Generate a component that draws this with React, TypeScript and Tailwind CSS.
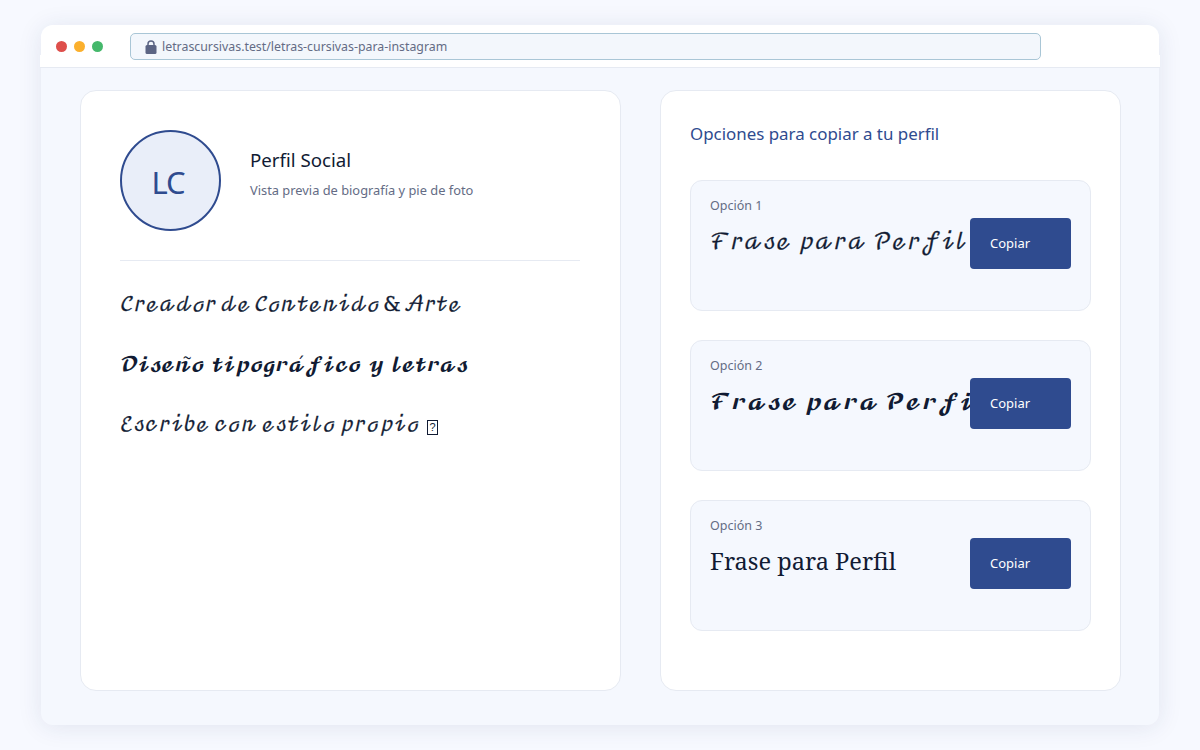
const SCRIPT = "font-['DejaVu_Math_TeX_Gyre','DejaVu_Serif',serif]"

const OPTIONS = [
  { label: 'Opción 1', text: 'ℱ𝓇𝒶𝓈ℯ 𝓅𝒶𝓇𝒶 𝒫ℯ𝓇𝒻𝒾𝓁', cls: `${SCRIPT} mb-[2px] text-[21.8px] [-webkit-text-stroke:0.35px_#111b33]` },
  { label: 'Opción 2', text: '𝓕𝓻𝓪𝓼𝓮 𝓹𝓪𝓻𝓪 𝓟𝓮𝓻𝓯𝓲𝓵', cls: `${SCRIPT} mb-[2px] text-[20.5px]` },
  { label: 'Opción 3', text: 'Frase para Perfil', cls: "mb-[5px] font-['Noto_Serif',serif] text-[23.6px]" },
]

export default function App() {
  return (
    <div className="h-[750px] w-[1200px] overflow-hidden bg-[#f7f9ff] px-[41px] py-[25px] font-['Noto_Sans',sans-serif]">
      <div className="h-[700px] rounded-xl bg-[#f5f8fe] shadow-[0_2px_24px_rgba(30,50,100,0.10)]">
        <div className="relative flex h-[43px] items-center rounded-t-xl bg-white pl-[15px] after:absolute after:-left-px after:-right-px after:bottom-0 after:h-[13px] after:border-b after:border-[#e6eaf2] after:bg-white">
          <span className="h-[11px] w-[11px] rounded-full bg-[#de4f4b]" />
          <span className="ml-[7px] h-[11px] w-[11px] rounded-full bg-[#fbb02d]" />
          <span className="ml-[7px] h-[11px] w-[11px] rounded-full bg-[#45b86b]" />
          <div className="relative z-10 ml-[27px] flex h-[27px] w-[911px] items-center rounded-[5px] border border-[#a9c6d6] bg-[#f3f7fc] pl-[14px] text-[12.35px] text-[#646c85]">
            <svg width="12" height="14" viewBox="0 0 12 14" className="mr-[5px]">
              <path d="M3 6V4a3 3 0 0 1 6 0v2" fill="none" stroke="#5c6584" strokeWidth="1.5" />
              <rect x="0.5" y="5" width="11" height="9" rx="1.5" fill="#5c6584" />
            </svg>
            <span className="mt-[2px]">letrascursivas.test/letras-cursivas-para-instagram</span>
          </div>
        </div>
        <div className="flex gap-[39px] px-[39px] pt-[22px]">
          <section className="h-[601px] w-[541px] shrink-0 rounded-2xl border border-[#e6eaf2] bg-white pl-[39px] pr-[40px] pt-[39px]">
            <div className="flex items-center border-b border-[#e6eaf2] pb-[29px]">
              <div className="flex h-[101px] w-[101px] items-center justify-center rounded-full border-2 border-[#2f4b8f] bg-[#e9eef9] pr-[5px] pt-[4px] text-[31px] tracking-[-1px] text-[#2f4b8f]">
                LC
              </div>
              <div className="mb-[16px] ml-[29px]">
                <h2 className="text-[18.7px] leading-[26px] text-[#111b33]">Perfil Social</h2>
                <p className="mt-[8px] text-[12.85px] leading-[18px] text-[#646c85]">Vista previa de biografía y pie de foto</p>
              </div>
            </div>
            <div className={`mt-[27px] ${SCRIPT} leading-[36px] whitespace-nowrap text-[#111b33]`}>
              <p className="text-[19.5px] tracking-[-0.5px] [word-spacing:-2px] [-webkit-text-stroke:0.35px_#111b33]">𝒞𝓇ℯ𝒶𝒹ℴ𝓇 𝒹ℯ 𝒞ℴ𝓃𝓉ℯ𝓃𝒾𝒹ℴ &amp; 𝒜𝓇𝓉ℯ</p>
              <p className="mt-6 text-[18px] tracking-[-1.1px] [word-spacing:3px]">𝓓𝓲𝓼𝓮𝓷̃𝓸 𝓽𝓲𝓹𝓸𝓰𝓻𝓪́𝓯𝓲𝓬𝓸 𝔂 𝓵𝓮𝓽𝓻𝓪𝓼</p>
              <p className="mt-6 text-[19.5px] [word-spacing:-2px] [-webkit-text-stroke:0.35px_#111b33]">
                ℰ𝓈𝒸𝓇𝒾𝒷ℯ 𝒸ℴ𝓃 ℯ𝓈𝓉𝒾𝓁ℴ 𝓅𝓇ℴ𝓅𝒾ℴ{' '}
                <span className="ml-[3px] inline-flex h-[15px] w-[11px] items-center justify-center border border-[#111b33] align-[0px] font-['Liberation_Sans',sans-serif] text-[11px] leading-none [-webkit-text-stroke:0]">?</span>
              </p>
            </div>
          </section>
          <section className="h-[601px] w-[461px] shrink-0 rounded-2xl border border-[#e6eaf2] bg-white px-[29px] pt-[29px]">
            <h3 className="text-[16.9px] leading-[28px] text-[#2f4b8f]">Opciones para copiar a tu perfil</h3>
            <div className="mt-[32px] flex flex-col gap-[29px]">
              {OPTIONS.map((o) => (
                <div key={o.label} className="h-[131px] rounded-xl border border-[#e6eaf2] bg-[#f5f8fe] px-[19px] pt-[16px]">
                  <div className="text-[12.5px] leading-[18px] text-[#646c85]">{o.label}</div>
                  <div className="mt-[3px] flex items-center">
                    <span className={`min-w-0 flex-1 whitespace-nowrap leading-[40px] text-[#111b33] ${o.cls}`}>{o.text}</span>
                    <button type="button" className="relative h-[51px] w-[101px] shrink-0 rounded-[4px] bg-[#2f4b8f] pl-5 text-left text-[13px] text-white">
                      Copiar
                    </button>
                  </div>
                </div>
              ))}
            </div>
          </section>
        </div>
      </div>
    </div>
  )
}
